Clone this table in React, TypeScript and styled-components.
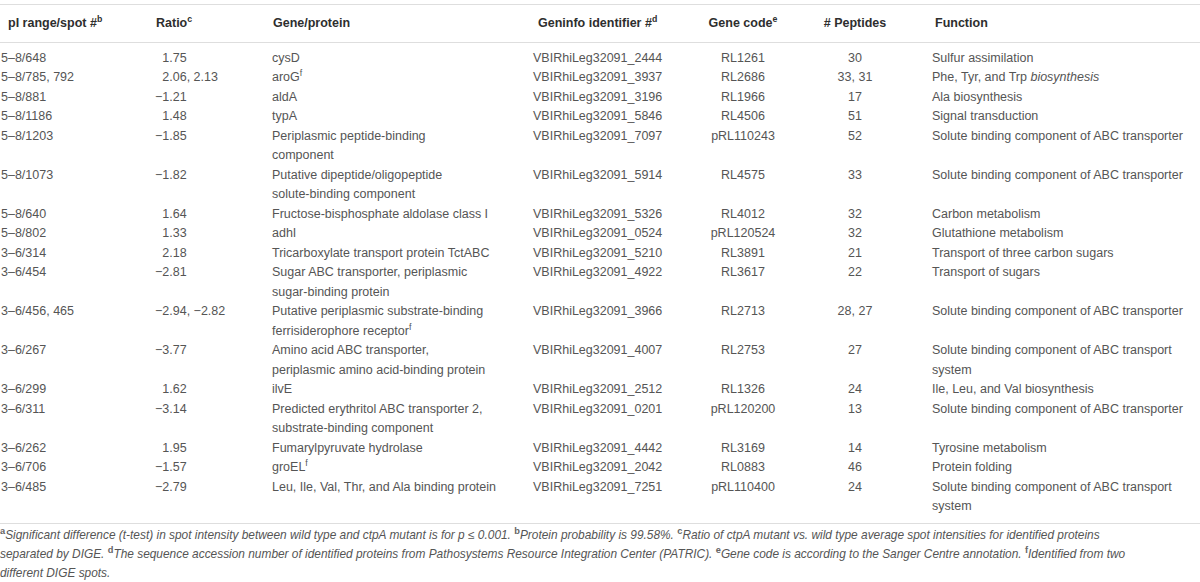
import React from "react";
import styled, { createGlobalStyle } from "styled-components";

const GlobalStyle = createGlobalStyle`
  html, body { margin: 0; padding: 0; background: #ffffff; }
  body { font-family: "Liberation Sans", Arial, Helvetica, sans-serif; }
`;

type Align = "left" | "center";

interface Column {
  key: string;
  title: React.ReactNode;
  width: number;
  align: Align;
  pad: number;
  headPad: number;
}

const Page = styled.div`
  width: 1200px;
  padding-top: 4px;
`;

const Table = styled.table`
  width: 1200px;
  border-collapse: collapse;
  table-layout: fixed;
  font-size: 12.5px;
  line-height: 19.5px;
  color: #555555;
`;

const HeadCell = styled.th<{ $align: Align; $pad: number }>`
  border-top: 1px solid #dedede;
  border-bottom: 1px solid #dedede;
  padding: 9px 0 8px ${(p) => p.$pad}px;
  font-weight: bold;
  color: #2e2e2e;
  text-align: ${(p) => p.$align};
  white-space: nowrap;
  vertical-align: middle;
`;

const BodyRow = styled.tr`
  &:first-child > td {
    padding-top: 6px;
  }
  &:last-child > td {
    padding-bottom: 6px;
    border-bottom: 1px solid #dedede;
  }
`;

const Cell = styled.td<{ $align: Align; $pad: number }>`
  padding: 0 0 0 ${(p) => p.$pad}px;
  text-align: ${(p) => p.$align};
  vertical-align: top;
  white-space: nowrap;
`;

const Sup = styled.sup`
  font-size: 0.7em;
  line-height: 0;
  vertical-align: super;
  font-style: normal;
`;

const NoteSup = styled.sup`
  font-size: 0.78em;
  line-height: 0;
  vertical-align: super;
  font-style: normal;
  font-weight: bold;
  color: #666666;
`;

const Ghost = styled.span`
  visibility: hidden;
`;

const Note = styled.p`
  margin: 0;
  padding-top: 2px;
  font-size: 11.9px;
  line-height: 19px;
  font-style: italic;
  color: #555555;
  white-space: nowrap;
`;

const columns: Column[] = [
  { key: "spot", title: <>pI range/spot #<Sup>b</Sup></>, width: 152, align: "left", pad: 1, headPad: 8 },
  { key: "ratio", title: <>Ratio<Sup>c</Sup></>, width: 118, align: "left", pad: 3, headPad: 4 },
  { key: "gene", title: "Gene/protein", width: 261, align: "left", pad: 2, headPad: 3 },
  { key: "gi", title: <>Geninfo identifier #<Sup>d</Sup></>, width: 159, align: "left", pad: 2, headPad: 7 },
  { key: "code", title: <>Gene code<Sup>e</Sup></>, width: 106, align: "center", pad: 0, headPad: 0 },
  { key: "pep", title: "# Peptides", width: 118, align: "center", pad: 0, headPad: 0 },
  { key: "fn", title: "Function", width: 286, align: "left", pad: 18, headPad: 21 },
];

type Row = {
  spot: string;
  ratio: string[];
  gene: React.ReactNode[];
  gi: string;
  code: string;
  pep: string;
  fn: React.ReactNode[];
};

const ABC = "Solute binding component of ABC transporter";

const rows: Row[] = [
  { spot: "5–8/648", ratio: ["1.75"], gene: ["cysD"], gi: "2444", code: "RL1261", pep: "30", fn: ["Sulfur assimilation"] },
  { spot: "5–8/785, 792", ratio: ["2.06", "2.13"], gene: [<>aroG<Sup>f</Sup></>], gi: "3937", code: "RL2686", pep: "33, 31", fn: [<>Phe, Tyr, and Trp <i>biosynthesis</i></>] },
  { spot: "5–8/881", ratio: ["−1.21"], gene: ["aldA"], gi: "3196", code: "RL1966", pep: "17", fn: ["Ala biosynthesis"] },
  { spot: "5–8/1186", ratio: ["1.48"], gene: ["typA"], gi: "5846", code: "RL4506", pep: "51", fn: ["Signal transduction"] },
  { spot: "5–8/1203", ratio: ["−1.85"], gene: ["Periplasmic peptide-binding", "component"], gi: "7097", code: "pRL110243", pep: "52", fn: [ABC] },
  { spot: "5–8/1073", ratio: ["−1.82"], gene: ["Putative dipeptide/oligopeptide", "solute-binding component"], gi: "5914", code: "RL4575", pep: "33", fn: [ABC] },
  { spot: "5–8/640", ratio: ["1.64"], gene: ["Fructose-bisphosphate aldolase class I"], gi: "5326", code: "RL4012", pep: "32", fn: ["Carbon metabolism"] },
  { spot: "5–8/802", ratio: ["1.33"], gene: ["adhI"], gi: "0524", code: "pRL120524", pep: "32", fn: ["Glutathione metabolism"] },
  { spot: "3–6/314", ratio: ["2.18"], gene: ["Tricarboxylate transport protein TctABC"], gi: "5210", code: "RL3891", pep: "21", fn: ["Transport of three carbon sugars"] },
  { spot: "3–6/454", ratio: ["−2.81"], gene: ["Sugar ABC transporter, periplasmic", "sugar-binding protein"], gi: "4922", code: "RL3617", pep: "22", fn: ["Transport of sugars"] },
  { spot: "3–6/456, 465", ratio: ["−2.94", "−2.82"], gene: ["Putative periplasmic substrate-binding", <>ferrisiderophore receptor<Sup>f</Sup></>], gi: "3966", code: "RL2713", pep: "28, 27", fn: [ABC] },
  { spot: "3–6/267", ratio: ["−3.77"], gene: ["Amino acid ABC transporter,", "periplasmic amino acid-binding protein"], gi: "4007", code: "RL2753", pep: "27", fn: ["Solute binding component of ABC transport", "system"] },
  { spot: "3–6/299", ratio: ["1.62"], gene: ["ilvE"], gi: "2512", code: "RL1326", pep: "24", fn: ["Ile, Leu, and Val biosynthesis"] },
  { spot: "3–6/311", ratio: ["−3.14"], gene: ["Predicted erythritol ABC transporter 2,", "substrate-binding component"], gi: "0201", code: "pRL120200", pep: "13", fn: [ABC] },
  { spot: "3–6/262", ratio: ["1.95"], gene: ["Fumarylpyruvate hydrolase"], gi: "4442", code: "RL3169", pep: "14", fn: ["Tyrosine metabolism"] },
  { spot: "3–6/706", ratio: ["−1.57"], gene: [<>groEL<Sup>f</Sup></>], gi: "2042", code: "RL0883", pep: "46", fn: ["Protein folding"] },
  { spot: "3–6/485", ratio: ["−2.79"], gene: ["Leu, Ile, Val, Thr, and Ala binding protein"], gi: "7251", code: "pRL110400", pep: "24", fn: ["Solute binding component of ABC transport", "system"] },
];

const Lines: React.FC<{ items: React.ReactNode[] }> = ({ items }) => (
  <>
    {items.map((it, i) => (
      <React.Fragment key={i}>
        {i > 0 && <br />}
        {it}
      </React.Fragment>
    ))}
  </>
);

const Ratio: React.FC<{ values: string[] }> = ({ values }) => (
  <>
    {values.map((v, i) => {
      const neg = v.startsWith("−");
      return (
        <React.Fragment key={i}>
          {i > 0 && ", "}
          {!neg && i === 0 && <Ghost>−</Ghost>}
          {v}
        </React.Fragment>
      );
    })}
  </>
);

const cellContent = (row: Row, key: string): React.ReactNode => {
  switch (key) {
    case "spot":
      return row.spot;
    case "ratio":
      return <Ratio values={row.ratio} />;
    case "gene":
      return <Lines items={row.gene} />;
    case "gi":
      return `VBIRhiLeg32091_${row.gi}`;
    case "code":
      return row.code;
    case "pep":
      return row.pep;
    default:
      return <Lines items={row.fn} />;
  }
};

export default function App() {
  return (
    <Page>
      <GlobalStyle />
      <Table>
        <colgroup>
          {columns.map((c) => (
            <col key={c.key} style={{ width: c.width }} />
          ))}
        </colgroup>
        <thead>
          <tr>
            {columns.map((c) => (
              <HeadCell key={c.key} $align={c.align} $pad={c.headPad}>
                {c.title}
              </HeadCell>
            ))}
          </tr>
        </thead>
        <tbody>
          {rows.map((r, i) => (
            <BodyRow key={i}>
              {columns.map((c) => (
                <Cell key={c.key} $align={c.align} $pad={c.pad}>
                  {cellContent(r, c.key)}
                </Cell>
              ))}
            </BodyRow>
          ))}
        </tbody>
      </Table>
      <Note>
        <NoteSup>a</NoteSup>Significant difference (t-test) in spot intensity between wild type and ctpA mutant is for p ≤ 0.001.{" "}
        <NoteSup>b</NoteSup>Protein probability is 99.58%. <NoteSup>c</NoteSup>Ratio of ctpA mutant vs. wild type average spot intensities for identified proteins
        <br />
        separated by DIGE. <NoteSup>d</NoteSup>The sequence accession number of identified proteins from Pathosystems Resource Integration Center (PATRIC).{" "}
        <NoteSup>e</NoteSup>Gene code is according to the Sanger Centre annotation. <NoteSup>f</NoteSup>Identified from two
        <br />
        different DIGE spots.
      </Note>
    </Page>
  );
}
